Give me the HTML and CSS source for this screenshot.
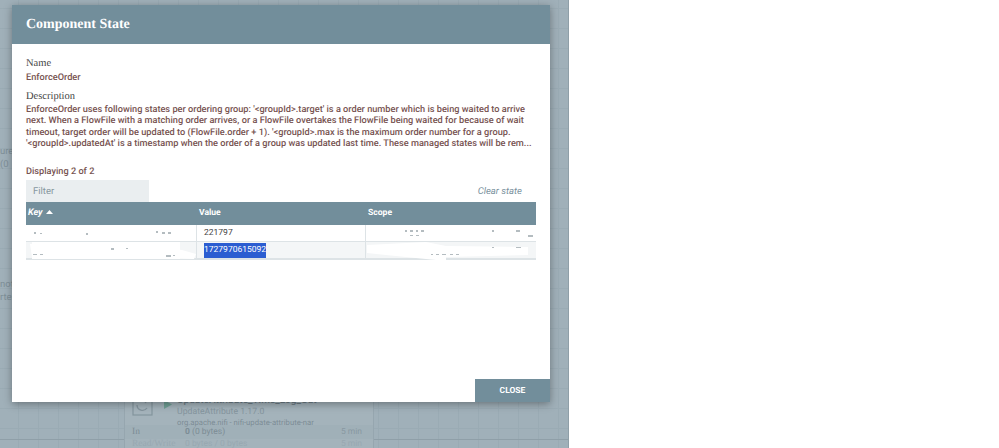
FILE: index.html
```html
<!DOCTYPE html>
<html lang="en">
<head>
<meta charset="utf-8">
<title>Component State</title>
<link rel="stylesheet" href="styles.css">
</head>
<body>
<div class="canvas">
  <div class="bg-node bg-node-a"><span>ure</span><span>(0</span></div>
  <div class="bg-node bg-node-b"><span>not</span><span>rtes</span></div>
  <div class="bg-line"></div>
  <div class="bg-card">
    <div class="bg-card-top">
      <svg class="bg-icon" width="21" height="21" viewBox="0 0 21 21"><rect x="1" y="1" width="19" height="19" fill="none" stroke="#84949d" stroke-width="1.2"/><path d="M5 10a5.500 5.500 0 0 0 10 3M10 5a5 5 0 0 1 4 3" fill="none" stroke="#84949d" stroke-width="1.3"/></svg>
      <svg class="bg-play" width="9" height="9" viewBox="0 0 9 9"><path d="M1 0l8 4.500-8 4.500z" fill="#6f9f95"/></svg>
      <div class="bg-card-text">
        <div class="bg-title">UpdateAttribute_Time_Log_Out</div>
        <div class="bg-type">UpdateAttribute 1.17.0</div>
        <div class="bg-bundle">org.apache.nifi - nifi-update-attribute-nar</div>
      </div>
    </div>
    <div class="bg-row"><span class="bg-label">In</span><span class="bg-value"><b>0</b> (0 bytes)</span><span class="bg-time">5 min</span></div>
    <div class="bg-row bg-row-faint"><span class="bg-label">Read/Write</span><span class="bg-value">0 bytes / 0 bytes</span><span class="bg-time">5 min</span></div>
  </div>

  <section class="dialog">
    <header class="dialog-header">Component State</header>
    <div class="dialog-body">
      <div class="field-label">Name</div>
      <div class="field-value">EnforceOrder</div>
      <div class="field-label field-label-gap">Description</div>
      <p class="description">EnforceOrder uses following states per ordering group: '&lt;groupId&gt;.target' is a order number which is being waited to arrive next. When a FlowFile with a matching order arrives, or a FlowFile overtakes the FlowFile being waited for because of wait timeout, target order will be updated to (FlowFile.order + 1). '&lt;groupId&gt;.max is the maximum order number for a group. '&lt;groupId&gt;.updatedAt' is a timestamp when the order of a group was updated last time. These managed states will be rem...</p>
      <div class="displaying">Displaying 2 of 2</div>
      <div class="toolbar">
        <div class="filter">Filter</div>
        <a class="clear-state">Clear state</a>
      </div>
      <div class="grid">
        <div class="grid-row grid-head">
          <div class="cell key-head">Key <svg class="sort" width="7" height="4" viewBox="0 0 7 4"><path d="M0 4l3.500-4 3.500 4z" fill="#fff"/></svg></div>
          <div class="cell">Value</div>
          <div class="cell">Scope</div>
        </div>
        <div class="grid-row grid-data">
          <div class="cell"></div>
          <div class="cell">221797</div>
          <div class="cell"></div>
        </div>
        <div class="grid-row grid-data grid-alt">
          <div class="cell"></div>
          <div class="cell"><span class="selected">1727970615092</span></div>
          <div class="cell"></div>
        </div>
        <svg class="redaction" width="510" height="36" viewBox="0 0 510 36">
          <path d="M8 1H165V15H8z M6 18H154V35H6z" fill="#fff"/>
          <path d="M4 20L60 19L110 20L156 26L170 30L168 35L6 33z" fill="#fff"/>
          <path d="M342 2H508V15H342z" fill="#fff"/>
          <path d="M341 21L400 18L420 22L502 23V31L420 33V36H410L360 31L341 29z" fill="#fff"/>
          <g fill="#b4bcc0">
            <path d="M8 8h2v2h-2zM14 9h2v1h-2zM60 9h2v2h-2zM130 7h2v2h-2zM136 8h3v2h-3zM142 8h3v2h-3z"/>
            <path d="M7 30h4v1h-4zM14 30h3v1h-3zM85 24h3v2h-3zM100 24h2v1h-2zM140 31h5v2h-5zM147 31h2v1h-2zM405 30h2v1h-2zM410 30h3v1h-3zM416 30h4v1h-4zM424 30h3v1h-3zM430 30h3v1h-3z"/>
            <path d="M379 6h2v2h-2zM384 6h3v2h-3zM390 6h2v2h-2zM395 6h3v2h-3zM384 11h3v1h-3zM390 11h3v1h-3zM466 6h2v2h-2zM490 6h4v2h-4zM502 11h5v2h-5zM466 23h2v1h-2zM490 23h5v1h-5z"/>
          </g>
        </svg>
      </div>
    </div>
    <footer class="dialog-footer"><button class="close">CLOSE</button></footer>
  </section>
</div>
</body>
</html>
```
FILE: styles.css
```css
* { box-sizing: border-box; }
html, body { margin: 0; height: 100%; background: #fff; }
body {
  overflow: hidden;
  font-family: Roboto, "Liberation Sans", sans-serif;
  text-rendering: geometricPrecision;
}

.canvas {
  position: relative;
  width: 569px;
  height: 448px;
  overflow: hidden;
  background-color: #a0b0b9;
  background-image:
    linear-gradient(#9aabb4 1px, transparent 1px),
    linear-gradient(90deg, #9aabb4 1px, transparent 1px);
  background-size: 20px 20px;
  background-position: 18px 8px;
  border-right: 1px solid #8f9fa8;
  padding-top: 5px;
  padding-left: 12px;
}

/* Nodes on the dimmed canvas behind the dialog */
.bg-node {
  position: absolute;
  left: 0;
  display: flex;
  flex-direction: column;
  gap: 2px;
  font-size: 9.500px;
  line-height: 11px;
  color: #7f8f98;
}
.bg-node-a { top: 146px; }
.bg-node-b { top: 279px; }
.bg-line {
  position: absolute;
  left: 0;
  right: 0;
  top: 439px;
  height: 1px;
  background: #8f9fa8;
}
.bg-card {
  position: absolute;
  left: 124px;
  top: 380px;
  width: 250px;
  height: 68px;
  background: #a4b3bb;
  border-left: 1px solid #96a6af;
  border-right: 1px solid #96a6af;
  color: #7c8c95;
}
.bg-card-top { display: flex; height: 45px; padding: 15px 0 0 7px; }
.bg-play { margin: 5px 0 0 10px; }
.bg-card-text { margin: 0 0 0 5px; }
.bg-title { font-size: 10px; line-height: 12px; font-weight: 500; color: #6e7e87; }
.bg-type { font-size: 8.700px; line-height: 11px; color: #84959e; }
.bg-bundle { font-size: 7.700px; line-height: 10px; }
.bg-row {
  display: flex;
  align-items: center;
  height: 14px;
  padding: 0 11px 0 7px;
  font-size: 8.500px;
  line-height: 12px;
  background: #a0b0b8;
}
.bg-label { width: 53px; font-family: "Liberation Serif", serif; font-size: 9.500px; }
.bg-value { flex: 1; }
.bg-time { color: #8898a1; }
.bg-row-faint { height: 9px; color: #98a8b1; background: transparent; }
.bg-row-faint .bg-label, .bg-row-faint .bg-time { color: #98a8b1; }

/* Dialog */
.dialog {
  position: relative;
  width: 538px;
  height: 397px;
  display: flex;
  flex-direction: column;
  background: #fff;
  box-shadow: 0 2px 8px rgba(0, 0, 0, .35);
}
.dialog-header {
  height: 39px;
  padding: 12px 0 0 14px;
  background: #728e9b;
  color: #fff;
  font-family: "Liberation Serif", serif;
  font-weight: 700;
  font-size: 14px;
  line-height: 16px;
}
.dialog-body { flex: 1; padding: 13px 14px 0; }
.field-label {
  font-family: "Liberation Serif", serif;
  font-size: 10.500px;
  line-height: 13px;
  color: #444;
}
.field-label-gap { margin-top: 6px; }
.field-value {
  margin-top: 1px;
  font-size: 9.200px;
  line-height: 13px;
  font-weight: 500;
  color: #775351;
}
.description {
  margin: 1px 0 0;
  width: 510px;
  font-size: 9.200px;
  line-height: 11.300px;
  font-weight: 500;
  color: #775351;
}
.displaying {
  margin-top: 16px;
  font-size: 9.200px;
  line-height: 13px;
  font-weight: 500;
  color: #775351;
}
.toolbar {
  display: flex;
  justify-content: space-between;
  height: 22px;
  margin-top: 2px;
}
.filter {
  width: 123px;
  padding: 6px 0 0 7px;
  background: #eaeef0;
  font-size: 9.500px;
  line-height: 12px;
  color: #87979f;
}
.clear-state {
  margin: 5px 14px 0 0;
  font-size: 9.500px;
  line-height: 13px;
  font-style: italic;
  color: #7a929e;
}
.grid { position: relative; width: 510px; border-bottom: 1px solid #dde3e6; }
.grid-row { display: grid; grid-template-columns: 171px 169px 170px; }
.grid-head {
  height: 23px;
  background: #728e9b;
  color: #fff;
  font-size: 8.600px;
  font-weight: 700;
  line-height: 23px;
}
.grid-head .cell { padding-left: 2px; }
.key-head { font-style: italic; font-size: 9px; }
.sort { margin: 0 0 1px 1px; }
.grid-data {
  height: 17px;
  border-bottom: 1px solid #dde3e6;
  font-size: 8.500px;
  line-height: 16px;
  color: #444;
}
.grid-data .cell { padding-left: 7px; border-right: 1px solid #dde3e6; }
.grid-data .cell:last-child { border-right: 0; }
.grid-alt { background: #f4f6f7; }
.selected { display: inline-block; background: #2b5dd1; color: #fff; height: 15px; line-height: 15px; }
.redaction { position: absolute; left: 0; top: 22px; pointer-events: none; }

.dialog-footer { display: flex; justify-content: flex-end; }
.close {
  width: 75px;
  height: 23px;
  border: 0;
  background: #728e9b;
  color: #fff;
  font-family: Roboto, sans-serif;
  font-size: 8.500px;
  font-weight: 700;
  text-rendering: geometricPrecision;
}
```
